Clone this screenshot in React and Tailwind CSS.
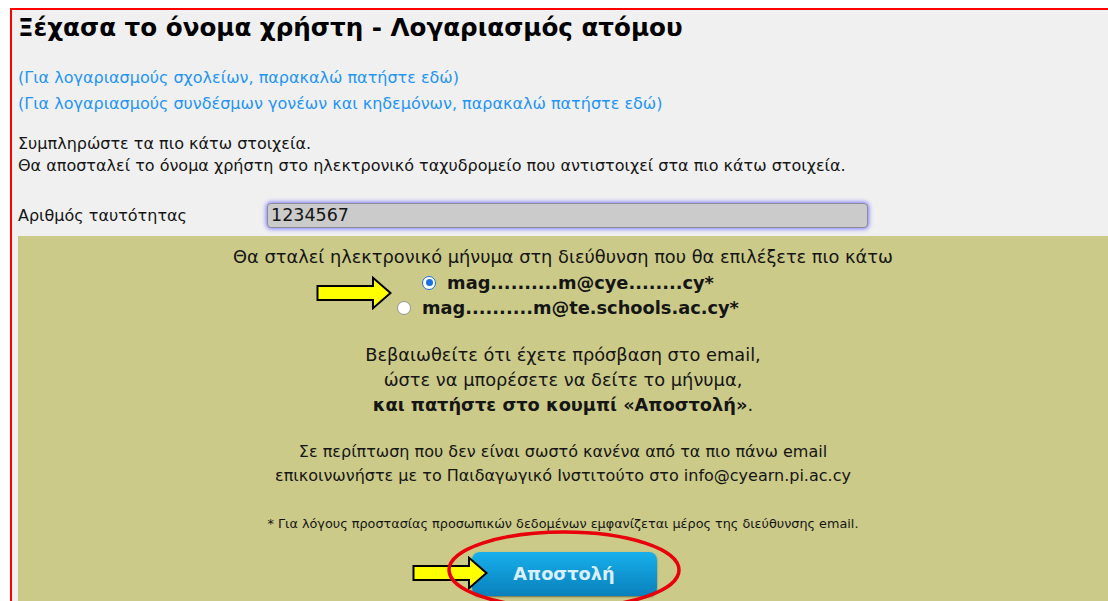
import React from "react";

function Arrow({ className }) {
  return (
    <svg className={className} viewBox="0 0 76 34" fill="none">
      <path
        d="M1.5 10 H57 V1.8 L74.5 17 L57 32.2 V24 H1.5 Z"
        fill="#ffff00"
        stroke="#000"
        strokeWidth="2"
        strokeLinejoin="miter"
      />
    </svg>
  );
}

function Radio({ checked }) {
  return checked ? (
    <span className="inline-flex h-[14px] w-[14px] shrink-0 items-center justify-center rounded-full border-[1.5px] border-[#1a6fe0] bg-white">
      <span className="h-[7px] w-[7px] rounded-full bg-[#1a6fe0]" />
    </span>
  ) : (
    <span className="inline-block h-[14px] w-[14px] shrink-0 rounded-full border-[1.5px] border-[#949494] bg-white" />
  );
}

export default function App() {
  return (
    <div className="relative h-[601px] w-[1108px] overflow-hidden bg-white font-['DejaVu_Sans',sans-serif] text-[#151515]">
      <div className="h-[8px]" />
      <div className="ml-[10px] border-l-2 border-t-2 border-[#ff0000] bg-[#f0f0f0] pl-[6px]">
        <h1 className="pt-[3px] text-[24.6px] font-bold leading-[30px] text-black">
          Ξέχασα το όνομα χρήστη - Λογαριασμός ατόμου
        </h1>

        <div className="mt-[22px] text-[16px] leading-[26px] text-[#1f95f5]">
          <div>(Για λογαριασμούς σχολείων, παρακαλώ πατήστε εδώ)</div>
          <div>(Για λογαριασμούς συνδέσμων γονέων και κηδεμόνων, παρακαλώ πατήστε εδώ)</div>
        </div>

        <div className="mt-[16px] text-[16px] leading-[22px]">
          <div>Συμπληρώστε τα πιο κάτω στοιχεία.</div>
          <div>Θα αποσταλεί το όνομα χρήστη στο ηλεκτρονικό ταχυδρομείο που αντιστοιχεί στα πιο κάτω στοιχεία.</div>
        </div>

        <div className="mt-[26px] flex items-center text-[16px]">
          <div className="w-[249px]">Αριθμός ταυτότητας</div>
          <div className="flex h-[25px] w-[601px] items-center rounded-[4px] border border-[#8c8c9c] bg-[#cbcbcb] pl-[3px] text-[17.5px] shadow-[0_0_4px_1px_#7b7bff]">
            1234567
          </div>
        </div>

        <div className="relative mt-[8px] bg-[#cbca88] pb-[40px] pt-[8px] text-center text-[17.8px]">
          <div className="leading-[26px]">
            Θα σταλεί ηλεκτρονικό μήνυμα στη διεύθυνση που θα επιλέξετε πιο κάτω
          </div>
          <div className="flex flex-col items-center pl-[10px] font-bold leading-[25px]">
            <div className="flex items-center gap-[11px]">
              <Radio checked />
              <span>mag..........m@cye........cy*</span>
            </div>
            <div className="flex items-center gap-[11px]">
              <Radio />
              <span>mag..........m@te.schools.ac.cy*</span>
            </div>
          </div>

          <div className="mt-[22px] leading-[25px]">
            <div>Βεβαιωθείτε ότι έχετε πρόσβαση στο email,</div>
            <div>ώστε να μπορέσετε να δείτε το μήνυμα,</div>
            <div>
              <b>και πατήστε στο κουμπί «Αποστολή»</b>.
            </div>
          </div>

          <div className="mt-[23px] text-[16px] leading-[24px]">
            <div>Σε περίπτωση που δεν είναι σωστό κανένα από τα πιο πάνω email</div>
            <div>επικοινωνήστε με το Παιδαγωγικό Ινστιτούτο στο info@cyearn.pi.ac.cy</div>
          </div>

          <div className="mt-[28px] text-[12.8px] leading-[16px]">
            * Για λόγους προστασίας προσωπικών δεδομένων εμφανίζεται μέρος της διεύθυνσης email.
          </div>

          <div className="mt-[20px] flex justify-center">
            <button className="ml-[2px] h-[44px] w-[185px] rounded-[8px] bg-gradient-to-b from-[#17b0ec] to-[#0980bb] text-[17.8px] font-bold text-[#dcefff] shadow-[0_1px_2px_rgba(0,0,0,0.45)]">
              Αποστολή
            </button>
          </div>

          <Arrow className="absolute left-[298px] top-[40px] h-[34px] w-[76px]" />
          <Arrow className="absolute left-[394px] top-[320px] h-[34px] w-[76px]" />
          <svg className="absolute left-[428px] top-[294px] h-[90px] w-[238px]" viewBox="0 0 238 90" fill="none">
            <ellipse cx="118" cy="40" rx="115" ry="38" stroke="#e8000b" strokeWidth="3.5" />
          </svg>
        </div>
      </div>
    </div>
  );
}
